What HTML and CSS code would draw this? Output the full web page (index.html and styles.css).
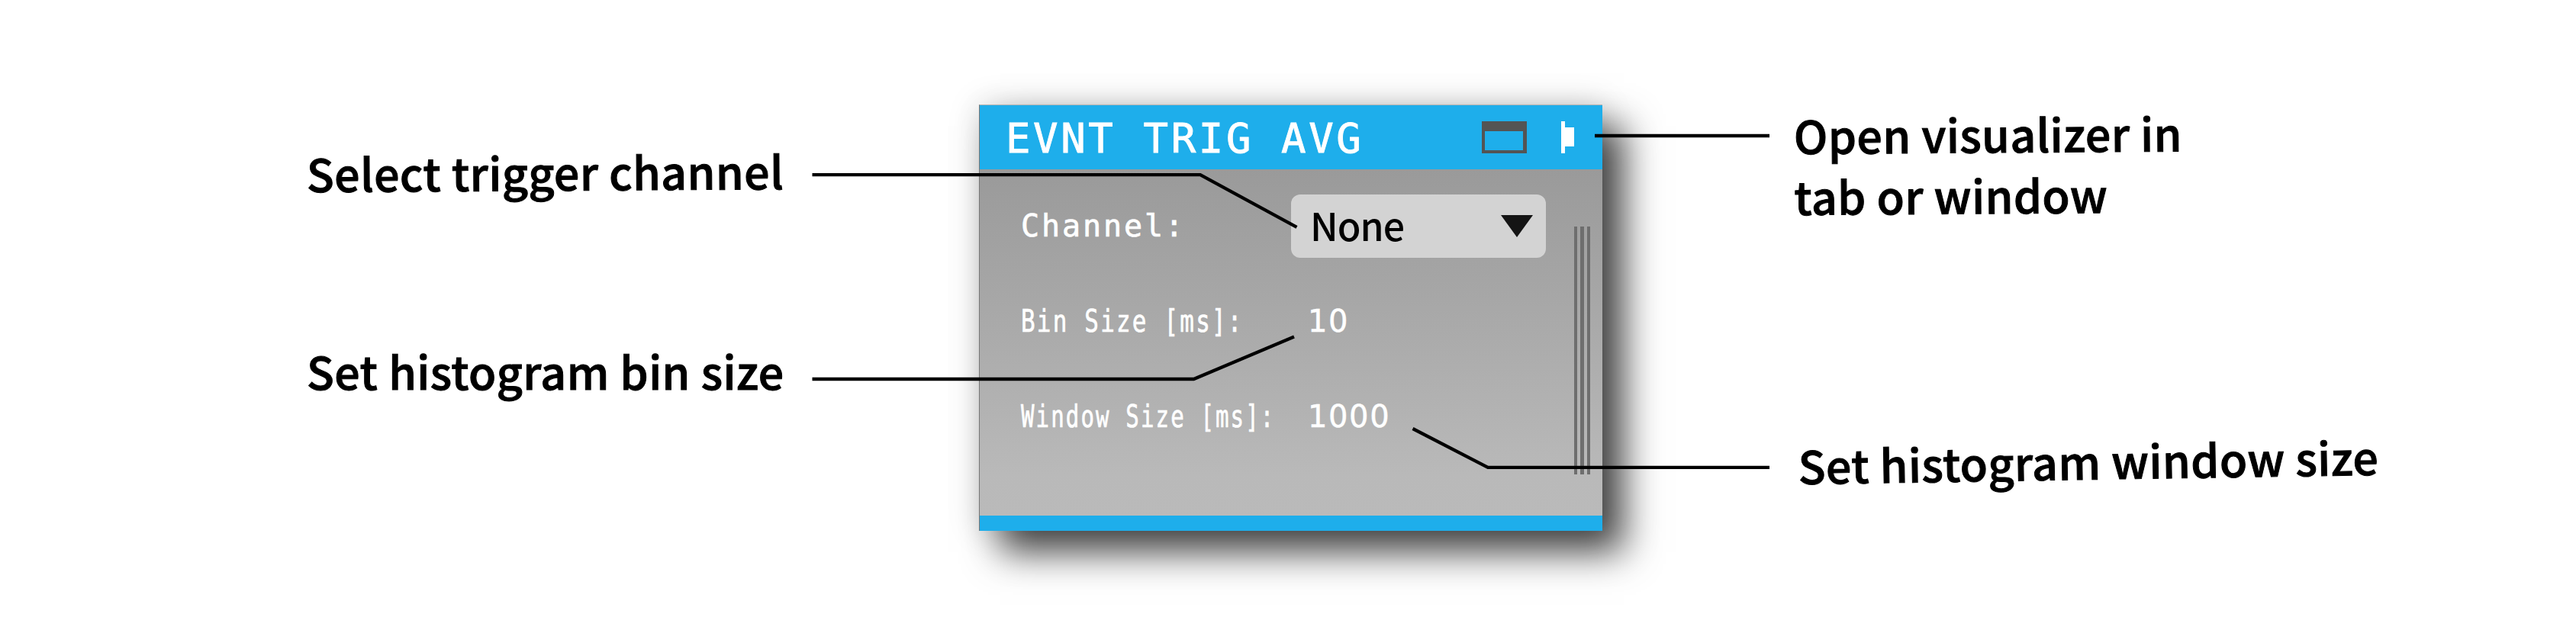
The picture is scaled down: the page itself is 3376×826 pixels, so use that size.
FILE: index.html
```html
<!DOCTYPE html>
<html lang="en">
<head>
<meta charset="utf-8">
<title>Event Triggered Average</title>
<link rel="stylesheet" href="styles.css">
</head>
<body>
<main class="figure">
  <div class="notes notes-left">
    <p class="note note-channel">Select trigger channel</p>
    <p class="note note-bin">Set histogram bin size</p>
  </div>
  <section class="panel">
    <header class="panel-header">
      <h1 class="title">EVNT TRIG AVG</h1>
      <svg class="icon-window" width="59" height="42" viewBox="0 0 59 42"><path fill="#545454" fill-rule="evenodd" d="M0 0H59V42H0ZM4 13V38H54V13Z"/></svg>
      <svg class="icon-tab" width="17" height="42" viewBox="0 0 17 42"><path fill="#fff" d="M0 0H5V8H17V33H5V42H0Z"/></svg>
    </header>
    <div class="panel-body">
      <div class="controls">
        <span class="label">Channel:</span>
        <div class="select"><span class="select-text">None</span><svg width="42" height="29" viewBox="0 0 42 29"><path fill="#141414" d="M0 0H42L21 29Z"/></svg></div>
        <span class="label"><span class="label-bin">Bin Size [ms]:</span></span>
        <span class="value">10</span>
        <span class="label"><span class="label-window">Window Size [ms]:</span></span>
        <span class="value">1000</span>
      </div>
      <div class="grip"><i></i><i class="wide"></i><i></i></div>
    </div>
    <footer class="panel-footer"></footer>
  </section>
  <div class="notes notes-right">
    <p class="note note-open">Open visualizer in<br>tab or window</p>
    <p class="note note-size">Set histogram window size</p>
  </div>
  <svg class="leaders" width="3376" height="826" viewBox="0 0 3376 826">
    <path d="M1064.5 229.2H1573L1699.5 297.8"/>
    <path d="M1064.5 497H1564.5L1696 441.5"/>
    <path d="M1851.5 562L1950 612.8H2319"/>
    <path d="M2090 178H2319"/>
  </svg>
</main>
</body>
</html>
```
FILE: styles.css
```css
* { box-sizing: border-box; }
body { margin: 0; background: #fff; }
.figure {
  position: relative;
  display: grid;
  grid-template-columns: 1283px 817px 1fr;
  width: 3376px;
  height: 826px;
  overflow: hidden;
}
.notes { display: flex; flex-direction: column; align-items: flex-start; }
.notes-left { padding: 187px 0 0 402px; gap: 179px; }
.notes-right { padding: 137px 0 0 251px; gap: 273px; }
.note {
  margin: 0;
  font: 500 59px/80px "Noto Sans CJK SC", "Noto Sans", sans-serif;
  letter-spacing: .47px;
  color: #000;
  -webkit-text-stroke: 1px #000;
  white-space: nowrap;
  transform-origin: 0 65px;
}
.note-channel { transform: rotate(-0.36deg); }
.note-open { transform: rotate(-0.4deg); }
.note-size { margin-left: 6px; transform: rotate(-0.93deg); }

.panel {
  display: flex;
  flex-direction: column;
  height: 559px;
  margin-top: 137px;
  border-left: 1px solid #777;
  border-top: 1px solid #b4b4b4;
  box-shadow: 28px 28px 46px rgba(0, 0, 0, .72), 0 0 40px rgba(0, 0, 0, .15);
}
.panel-header {
  display: flex;
  align-items: center;
  height: 84px;
  padding-left: 34px;
  background: #1eaeeb;
}
.title {
  flex: none;
  width: 624px;
  margin: 0;
  padding-top: 4px;
  font: 400 54px/76px "DejaVu Sans Mono", monospace;
  letter-spacing: 3.6px;
  color: #fff;
  -webkit-text-stroke: .9px #fff;
}
.icon-tab { margin-left: 45px; }
.panel-body {
  display: flex;
  height: 454px;
  background: linear-gradient(#9a9a9a, #a5a5a5 32%, #b9b9b9 88%, #bababa);
}
.controls {
  display: grid;
  grid-template-columns: 352px 334px;
  grid-template-rows: 83px 83px 83px;
  row-gap: 42px;
  padding: 33px 0 0 56px;
}
.label {
  margin-left: -2px;
  font: 400 40px/83px "DejaVu Sans Mono", monospace;
  letter-spacing: 2.9px;
  color: #fff;
  -webkit-text-stroke: .7px #fff;
  white-space: pre;
}
.label-bin, .label-window { display: inline-block; transform-origin: 0 50%; }
.label-bin { transform: scaleX(.772); }
.label-window { transform: scaleX(.727); }
.value {
  padding-left: 22px;
  font: 400 40px/83px "DejaVu Sans", sans-serif;
  letter-spacing: 1.6px;
  color: #fff;
  -webkit-text-stroke: .5px #fff;
}
.select {
  display: flex;
  align-items: center;
  justify-content: space-between;
  padding: 0 17px 0 25px;
  border-radius: 12px;
  background: #d3d3d3;
}
.select-text {
  padding-bottom: 4px;
  font: 500 50px/79px "Noto Sans CJK SC", "Noto Sans", sans-serif;
  letter-spacing: -1px;
  color: #000;
}
.grip { display: flex; gap: 4px; height: 325px; margin: 75px 0 0 37px; }
.grip i { width: 4px; background: #6e6e6e; }
.grip .wide { width: 5px; }
.panel-footer { height: 20px; background: #1eaeeb; }
.leaders {
  position: absolute;
  inset: 0;
  fill: none;
  stroke: #000;
  stroke-width: 4.3px;
  stroke-linejoin: miter;
}
```
